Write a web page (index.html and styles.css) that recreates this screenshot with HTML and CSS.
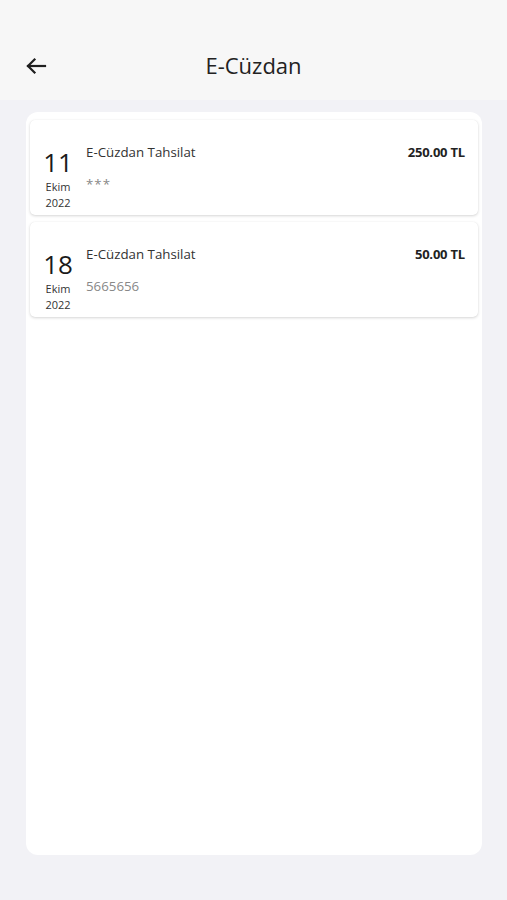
FILE: index.html
```html
<!DOCTYPE html>
<html lang="tr">
<head>
<meta charset="utf-8">
<link rel="stylesheet" href="styles.css">
</head>
<body>
<div class="app">
  <header class="topbar">
    <button class="back" aria-label="Geri">
      <svg width="22" height="18" viewBox="0 0 22 18" fill="none" stroke="#1f1f1f" stroke-width="2.2" stroke-linecap="square">
        <path d="M20 9H3"/>
        <path d="M9.5 2.5L3 9l6.5 6.5"/>
      </svg>
    </button>
    <h1 class="title">E-Cüzdan</h1>
  </header>
  <main class="content">
    <section class="panel">
      <article class="card">
        <div class="date">
          <span class="day">11</span>
          <span class="month">Ekim</span>
          <span class="year">2022</span>
        </div>
        <div class="info">
          <div class="name">E-Cüzdan Tahsilat</div>
          <div class="note stars">***</div>
        </div>
        <div class="amount">250.00 TL</div>
      </article>
      <article class="card">
        <div class="date">
          <span class="day">18</span>
          <span class="month">Ekim</span>
          <span class="year">2022</span>
        </div>
        <div class="info">
          <div class="name">E-Cüzdan Tahsilat</div>
          <div class="note">5665656</div>
        </div>
        <div class="amount">50.00 TL</div>
      </article>
    </section>
  </main>
</div>
</body>
</html>
```
FILE: styles.css
```css
* { box-sizing: border-box; }
html, body { margin: 0; padding: 0; }
body {
  background: #f2f2f6;
  font-family: "Open Sans", "Noto Sans", sans-serif;
  color: #222;
}
.app {
  width: 507px;
  min-height: 900px;
  display: flex;
  flex-direction: column;
}
.topbar {
  height: 100px;
  background: #f7f7f7;
  display: flex;
  align-items: center;
  padding-top: 32px;
  position: relative;
}
.back {
  border: 0;
  background: none;
  padding: 0;
  margin-left: 25px;
  width: 22px;
  height: 18px;
  display: flex;
}
.title {
  position: absolute;
  left: 0;
  right: 0;
  top: 30px;
  bottom: 0;
  margin: 0;
  display: flex;
  align-items: center;
  justify-content: center;
  font-size: 22px;
  font-weight: 400;
  color: #222;
  pointer-events: none;
}
.content {
  padding: 12px 25px 45px 26px;
  flex: 1;
  display: flex;
}
.panel {
  flex: 1;
  background: #fff;
  border-radius: 12px;
  height: 743px;
  padding: 8px 4px;
  display: flex;
  flex-direction: column;
  gap: 7px;
}
.card {
  height: 95px;
  background: #fff;
  border-radius: 5px;
  box-shadow: 0 1px 3px rgba(0,0,0,0.16), 0 0 1px rgba(0,0,0,0.08);
  display: flex;
  padding: 20px 13px 0 13px;
}
.date {
  display: flex;
  flex-direction: column;
  align-items: center;
  padding-top: 8px;
  width: 30px;
}
.day {
  font-size: 26px;
  line-height: 28px;
  font-weight: 400;
  color: #1a1a1a;
}
.month, .year {
  font-size: 11px;
  line-height: 16px;
  color: #333;
}
.month { margin-top: 3px; }
.info {
  flex: 1;
  margin-left: 13px;
  display: flex;
  flex-direction: column;
}
.name {
  font-size: 13.3px;
  line-height: 18px;
  color: #333;
  margin-top: 3px;
}
.note {
  font-size: 13.3px;
  line-height: 18px;
  color: #888;
  margin-top: 14px;
}
.stars { margin-top: 14px; letter-spacing: 1px; }
.amount {
  font-size: 13px;
  line-height: 18px;
  font-weight: 700;
  color: #222;
  margin-top: 3px;
  letter-spacing: -0.2px;
}
```
